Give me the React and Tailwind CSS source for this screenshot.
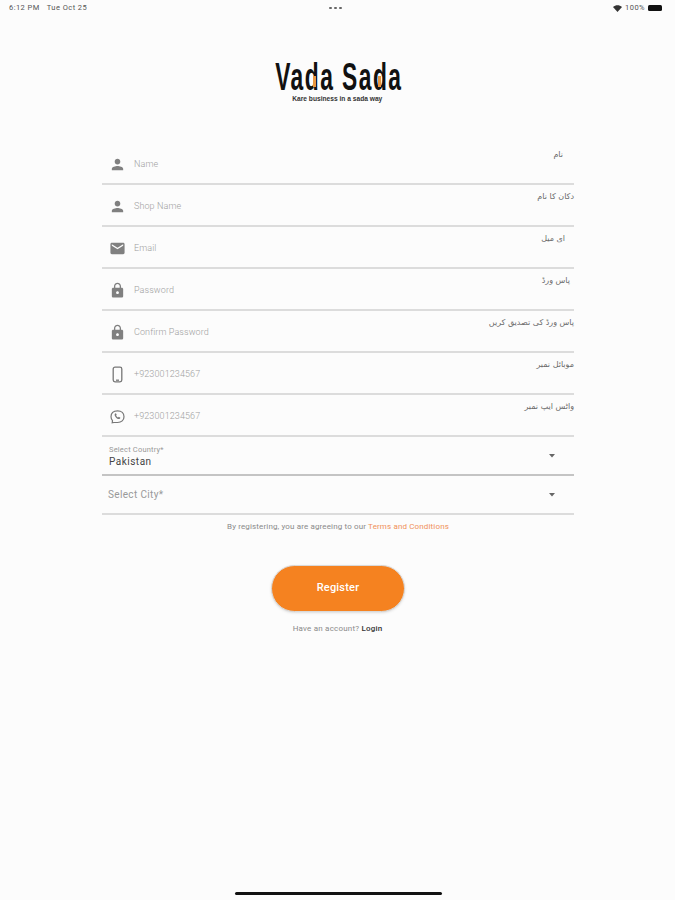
const person = "M12 12c2.21 0 4-1.79 4-4s-1.79-4-4-4-4 1.79-4 4 1.79 4 4 4zm0 2c-2.67 0-8 1.34-8 4v2h16v-2c0-2.66-5.33-4-8-4z";
const mail = "M20 4H4c-1.1 0-1.99.9-1.99 2L2 18c0 1.1.9 2 2 2h16c1.1 0 2-.9 2-2V6c0-1.1-.9-2-2-2zm0 4l-8 5-8-5V6l8 5 8-5v2z";
const lock = "M18 8h-1V6c0-2.76-2.24-5-5-5S7 3.24 7 6v2H6c-1.1 0-2 .9-2 2v10c0 1.1.9 2 2 2h12c1.1 0 2-.9 2-2V10c0-1.1-.9-2-2-2zm-6 9c-1.1 0-2-.9-2-2s.9-2 2-2 2 .9 2 2-.9 2-2 2zm3.1-9H8.9V6c0-1.71 1.39-3.1 3.1-3.1 1.71 0 3.1 1.39 3.1 3.1v2z";

function Glyph({ d }) {
  return (
    <svg viewBox="0 0 24 24" className="w-[17px] h-[17px] fill-[#808080] shrink-0">
      <path d={d} />
    </svg>
  );
}

function Phone() {
  return (
    <svg viewBox="0 0 17 17" className="w-[17px] h-[17px] shrink-0" fill="none" stroke="#777" strokeWidth="1.3">
      <rect x="4.2" y="1.2" width="8.6" height="14.6" rx="1.8" />
      <path d="M7 14.2h3" />
    </svg>
  );
}

function Whatsapp() {
  return (
    <svg viewBox="0 0 17 17" className="w-[17px] h-[17px] shrink-0" fill="none" stroke="#777" strokeWidth="1.2">
      <path d="M3.2 14.8l.3-2.2C2.6 11.6 2 10.4 2 8.8c0-3.6 2.5-6 6.6-6 3.9 0 6.4 2.5 6.4 5.9s-2.5 5.8-6.4 5.8H5z" />
      <path d="M6.3 5.4c-.9.6-.9 1.9.1 3.3 1 1.5 2.6 2.6 3.9 2.3.7-.2 1.1-.7 1.1-1.3l-1.6-.9-.7.7c-.8-.3-1.6-1.2-2-2l.6-.7-.8-1.6z" fill="#777" stroke="none" />
    </svg>
  );
}

function Row({ icon, placeholder, urdu, pr }) {
  return (
    <div className="relative h-[42px] flex items-center pl-[7px] pt-[3px] gap-2 border-b-2 border-[#dcdcdc]">
      {icon}
      <span className="font-['Roboto',sans-serif] font-light text-[9px] tracking-[0.1px] text-[#a0a0a0]">{placeholder}</span>
      <span dir="rtl" className={`absolute top-[4px] right-0 ${pr} font-['DejaVu_Sans',sans-serif] text-[8px] leading-[16px] text-[#6a6a6a]`}>{urdu}</span>
    </div>
  );
}

function Caret() {
  return (
    <svg viewBox="0 0 6 4" className="w-[6px] h-[4px] fill-[#666] mr-[19px] shrink-0">
      <path d="M0 0h6L3 3.4z" />
    </svg>
  );
}

export default function App() {
  return (
    <div className="w-[675px] h-[900px] bg-[#fcfcfc] flex flex-col font-['Roboto',sans-serif] overflow-hidden">
      <div className="h-[16px] flex items-center justify-between pl-[9px] pr-[13px] text-[7.5px] text-[#555] tracking-[0.45px]">
        <div className="w-[200px] flex gap-[7px]">
          <span>6:12 PM</span>
          <span>Tue Oct 25</span>
        </div>
        <div className="flex gap-[2.5px]">
          <span className="w-[2.5px] h-[2.5px] rounded-full bg-[#666]" />
          <span className="w-[2.5px] h-[2.5px] rounded-full bg-[#666]" />
          <span className="w-[2.5px] h-[2.5px] rounded-full bg-[#666]" />
        </div>
        <div className="w-[200px] flex items-center justify-end gap-[3px]">
          <svg viewBox="0 0 24 24" className="w-[9px] h-[9px] fill-[#333]">
            <path d="M12 21L0 8c7-6.5 17-6.5 24 0z" />
          </svg>
          <span>100%</span>
          <span className="w-[14px] h-[6px] bg-[#111] rounded-[1.5px]" />
        </div>
      </div>

      <div className="mt-[43px] flex flex-col items-center h-[84px]">
        <div className="relative h-[35px] w-[126px] flex justify-center ml-[3px]">
          <span className="font-['Liberation_Sans',sans-serif] font-bold text-[39px] leading-[35px] tracking-[2.5px] text-[#111] whitespace-nowrap scale-x-[0.585] origin-center">
            Vada Sada
          </span>
          <span className="absolute left-[37px] top-[17px] w-[3px] h-[11px] bg-[#e9973f]" />
          <span className="absolute left-[102px] top-[17px] w-[3px] h-[11px] bg-[#e9973f]" />
        </div>
        <span className="font-['Liberation_Sans',sans-serif] font-bold text-[8px] leading-[8px] mt-[1px] text-[#333] whitespace-nowrap scale-x-[0.83]">
          Kare business in a sada way
        </span>
      </div>

      <div className="mx-[102px] w-[472px] flex flex-col">
        <Row icon={<Glyph d={person} />} placeholder="Name" urdu="نام" pr="pr-[11px]" />
        <Row icon={<Glyph d={person} />} placeholder="Shop Name" urdu="دکان کا نام" pr="pr-0" />
        <Row icon={<Glyph d={mail} />} placeholder="Email" urdu="ای میل" pr="pr-[9px]" />
        <Row icon={<Glyph d={lock} />} placeholder="Password" urdu="پاس ورڈ" pr="pr-[4px]" />
        <Row icon={<Glyph d={lock} />} placeholder="Confirm Password" urdu="پاس ورڈ کی تصدیق کریں" pr="pr-0" />
        <Row icon={<Phone />} placeholder="+923001234567" urdu="موبائل نمبر" pr="pr-0" />
        <Row icon={<Whatsapp />} placeholder="+923001234567" urdu="واٹس ایپ نمبر" pr="pr-0" />

        <div className="h-[39px] flex items-center justify-between pl-[7px] border-b-2 border-[#c4c4c4]">
          <div className="flex flex-col pt-[3px]">
            <span className="text-[7.5px] leading-[9px] text-[#999] tracking-[0.2px]">Select Country*</span>
            <span className="text-[10px] leading-[16px] text-[#444] tracking-[0.5px]">Pakistan</span>
          </div>
          <Caret />
        </div>
        <div className="h-[39px] flex items-center justify-between pl-[6px] border-b-2 border-[#dcdcdc]">
          <span className="text-[10px] text-[#999] tracking-[0.35px]">Select City*</span>
          <Caret />
        </div>

        <p className="mt-[6px] text-center text-[8px] leading-[12px] text-[#8a8a8a] tracking-[0.14px]">
          By registering, you are agreeing to our <span className="text-[#f0905a]">Terms and Conditions</span>
        </p>

        <button className="self-center mt-[32px] w-[134px] h-[47px] rounded-full bg-[#f58220] border border-[#d9d9d9] shadow-sm text-white text-[11px] font-medium tracking-[0.2px]">
          Register
        </button>

        <p className="mt-[11px] text-center text-[8px] leading-[12px] text-[#8a8a8a] tracking-[0.2px] mr-[1px]">
          Have an account? <span className="text-[#333] font-medium">Login</span>
        </p>
      </div>

      <div className="mt-auto mb-[5px] ml-[235px] w-[207px] h-[3px] rounded-full bg-[#111]" />
    </div>
  );
}
